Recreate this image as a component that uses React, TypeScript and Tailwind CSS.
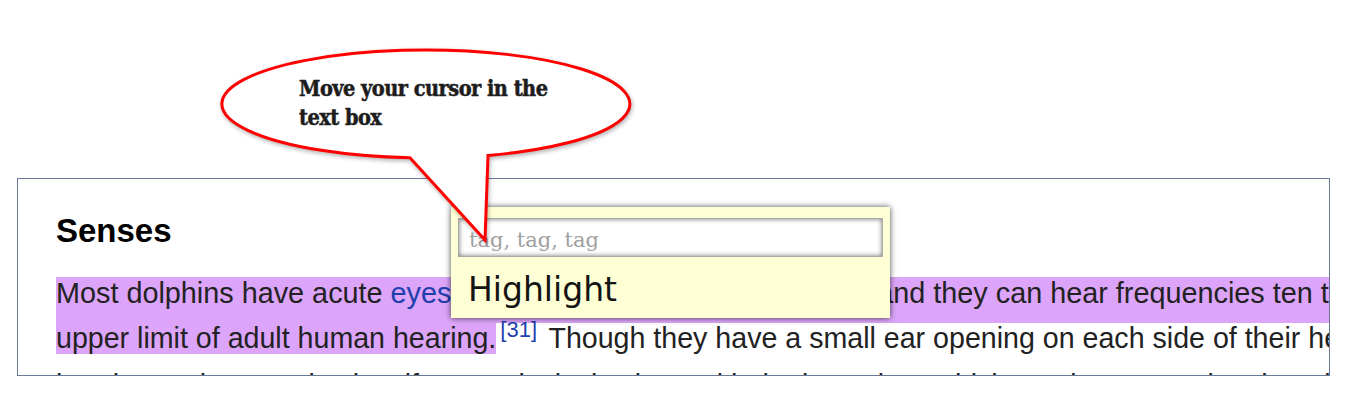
const body = { fontFamily: '"Liberation Sans", Arial, sans-serif' };
const slab = { fontFamily: '"DejaVu Serif Condensed", "DejaVu Serif", serif' };

const Callout = () => (
  <>
    <svg
      className="absolute left-0 top-0 pointer-events-none drop-shadow-[1px_2px_2px_rgba(0,0,0,0.3)]"
      width={1349}
      height={406}
    >
      <path
        d="M410 157.8 L485 240 L488 155.4 A204 54 0 1 0 410 157.8 Z"
        fill="#fff"
        stroke="#ff0000"
        strokeWidth={3}
        strokeLinejoin="miter"
      />
    </svg>
    <div
      className="absolute left-[299px] top-[74px] w-[300px] text-[21.5px] leading-[29px] font-bold text-[#1d1d1d] tracking-[-0.5px] [-webkit-text-stroke:0.5px_#1d1d1d]"
      style={slab}
    >
      Move your cursor in the
      <br />
      text box
    </div>
  </>
);

const TagPopup = () => (
  <div className="absolute left-[451px] top-[207px] w-[439px] h-[111px] bg-[#ffffd6] shadow-[0_0_6px_rgba(0,0,0,0.7)] px-[7px] pt-[11px]">
    <input
      readOnly
      placeholder="tag, tag, tag"
      className="block w-[425px] h-[39px] bg-white border border-[#a9a9a9] shadow-[inset_0_0_5px_rgba(0,0,0,0.55)] pl-[10px] pt-[4px] text-[21px] outline-none placeholder:text-[#a0a0a0]"
      style={{ fontFamily: '"DejaVu Serif", serif' }}
    />
    <div
      className="pl-[10px] pt-[15px] text-[33px] leading-[36px] text-[#141414]"
      style={{ fontFamily: '"DejaVu Sans", Verdana, sans-serif' }}
    >
      Highlight
    </div>
  </div>
);

export default function App() {
  return (
    <div className="relative w-[1349px] h-[406px] bg-white overflow-hidden">
      <div
        className="ml-[17px] mt-[178px] w-[1313px] h-[198px] border border-[#6a7899] overflow-hidden text-[#222]"
        style={body}
      >
        <div className="pl-[38px] pt-[35px] whitespace-nowrap">
          <h2 className="text-[33px] leading-[33px] font-bold text-black">Senses</h2>
          <div className="mt-[24px] h-[45px] text-[28.8px] leading-[45px]">
            <span className="bg-[#dca5f9] pb-[14px]">
              Most dolphins have acute <span className="text-[#1f3fae]">eyesight</span>, both in and out
              of the water, and they can hear frequencies ten times the
            </span>
          </div>
          <div className="h-[45px] text-[28.6px] leading-[45px]">
            <span className="bg-[#dca5f9]">upper limit of adult human hearing.</span>
            <sup className="ml-[4px] mr-[4px] text-[22px] text-[#1f3fae]">[31]</sup> Though they have a
            small ear opening on each side of their head, it is believed
          </div>
          <div className="h-[45px] text-[28.4px] leading-[45px]">
            hearing underwater is also, if not exclusively, done with the lower jaw, which conducts sound
            to the middle ear via a fat-filled cavity
          </div>
        </div>
      </div>
      <TagPopup />
      <Callout />
    </div>
  );
}
